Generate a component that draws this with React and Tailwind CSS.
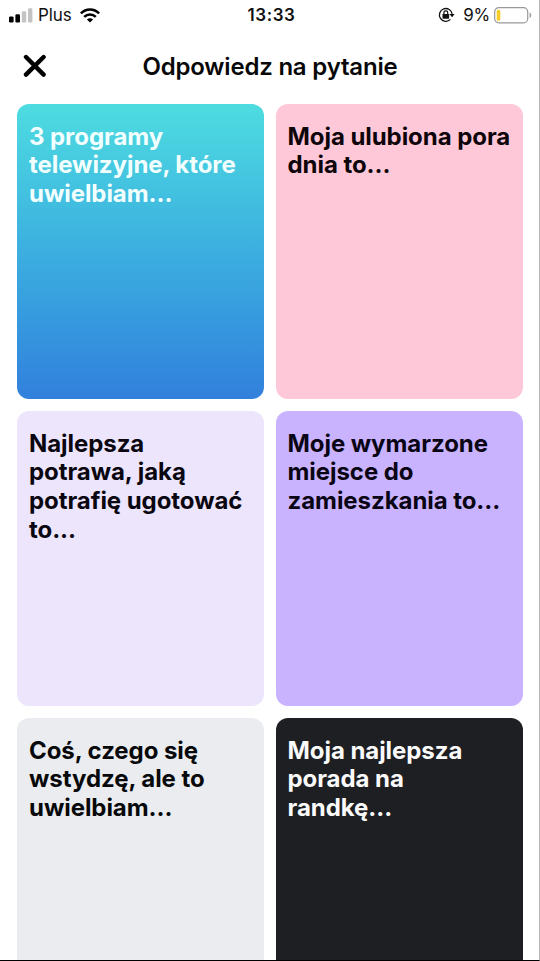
import React from "react";

const prompts = [
  {
    lines: ["3 programy", "telewizyjne, które", "uwielbiam..."],
    style: "bg-linear-to-b from-[#4edce0] to-[#3280dc] text-[#f2ffff]",
  },
  {
    lines: ["Moja ulubiona pora", "dnia to..."],
    style: "bg-[#fec8d8] text-[#0d0509]",
  },
  {
    lines: ["Najlepsza", "potrawa, jaką", "potrafię ugotować", "to..."],
    style: "bg-[#ece5fc] text-[#0a0710]",
  },
  {
    lines: ["Moje wymarzone", "miejsce do", "zamieszkania to..."],
    style: "bg-[#c9b3fe] text-[#0a0514]",
  },
  {
    lines: ["Coś, czego się", "wstydzę, ale to", "uwielbiam..."],
    style: "bg-[#ebecf0] text-[#08090b]",
  },
  {
    lines: ["Moja najlepsza", "porada na", "randkę..."],
    style: "bg-[#1e1f22] text-[#fafafa]",
  },
];

const SignalIcon = () => (
  <svg width="25" height="15" viewBox="0 0 25 15" className="block">
    <rect x="0" y="8.5" width="4.6" height="6" rx="1.3" fill="#000" />
    <rect x="6.4" y="6.2" width="4.6" height="8.3" rx="1.3" fill="#000" />
    <rect x="12.8" y="3.2" width="4.4" height="11.3" rx="1.2" fill="#c4c4c4" />
    <rect x="19" y="0.2" width="4.4" height="14.3" rx="1.2" fill="#c4c4c4" />
  </svg>
);

const WifiIcon = () => (
  <svg width="20" height="15" viewBox="0 0 20 15" className="block" fill="none" stroke="#000" strokeWidth="2.5">
    <path d="M0.9 5.4 C5.9 0.1 14.1 0.1 19.1 5.4" />
    <path d="M4.2 8.9 C7.4 5.6 12.6 5.6 15.8 8.9" />
    <path d="M10 14.4 L6.9 11.4 C8.6 9.9 11.4 9.9 13.1 11.4 Z" fill="#000" stroke="none" />
  </svg>
);

const RotationLockIcon = () => (
  <svg width="17" height="16" viewBox="0 0 17 16" className="block" fill="none" stroke="#111" strokeWidth="1.3">
    <path d="M12.4 12.4 A6.4 6.4 0 1 1 14.2 7.2" />
    <path d="M11.3 7 H16.6 L14.1 10.2 Z" fill="#111" stroke="none" />
    <rect x="4.5" y="7" width="6.6" height="4.7" rx="0.6" fill="#111" stroke="none" />
    <path d="M5.9 7.2 V5.8 A1.9 1.9 0 0 1 9.7 5.8 V7.2" strokeWidth="1.2" />
  </svg>
);

const BatteryIcon = () => (
  <svg width="38" height="17" viewBox="0 0 38 17" className="block">
    <rect x="0.7" y="0.7" width="33" height="15.2" rx="4.2" fill="#fff" stroke="#999" strokeWidth="1.2" />
    <rect x="2.7" y="2.8" width="3.6" height="11" rx="1.5" fill="#f7ce28" />
    <path d="M35.6 5.6 C37.8 6.3 37.8 10.3 35.6 11 Z" fill="#999" />
  </svg>
);

const CloseIcon = () => (
  <svg width="24" height="24" viewBox="0 0 24 24" className="block" fill="none" stroke="#000" strokeWidth="4.4" strokeLinecap="round">
    <path d="M3 3 L20.6 20.6 M20.6 3 L3 20.6" />
  </svg>
);

const StatusBar = () => (
  <div className="grid h-[30px] grid-cols-[1fr_auto_1fr] items-center pl-[9px] pr-[7px] text-[17px] leading-none text-[#111]">
    <div className="flex items-center">
      <SignalIcon />
      <span className="ml-[4px] tracking-[-0.1px]">Plus</span>
      <div className="ml-[8px]">
        <WifiIcon />
      </div>
    </div>
    <span className="pl-[2px] font-semibold tracking-[0.6px]">13:33</span>
    <div className="flex items-center justify-end">
      <RotationLockIcon />
      <span className="ml-[8px] mr-[4px] tracking-[-0.3px]">9%</span>
      <BatteryIcon />
    </div>
  </div>
);

const PromptCard = ({ lines, style }) => (
  <button className={`flex h-[295px] flex-col items-start rounded-[12px] px-[12px] pt-[18.6px] text-left text-[24px] font-[660] leading-[28.8px] tracking-[-0.06px] ${style}`}>
    {lines.map((line) => (
      <span key={line} className="whitespace-nowrap">
        {line}
      </span>
    ))}
  </button>
);

const App = () => {
  return (
    <div className="h-[961px] w-[540px] overflow-hidden border-r border-b border-r-[#b5b5b5] border-b-black bg-white font-['Inter',sans-serif]">
      <StatusBar />
      <header className="grid h-[74px] grid-cols-[1fr_auto_1fr] items-start px-[23px]">
        <button className="mt-[24px] w-[24px]" aria-label="Zamknij">
          <CloseIcon />
        </button>
        <h1 className="mt-[22px] pl-[1px] text-[24px] font-[580] leading-[30px] tracking-[-0.2px] text-[#080808]">Odpowiedz na pytanie</h1>
      </header>
      <main className="grid grid-cols-[247px_247px] gap-x-[11.5px] gap-y-[12px] pl-[17px]">
        {prompts.map((prompt) => (
          <PromptCard key={prompt.lines[0]} {...prompt} />
        ))}
      </main>
    </div>
  );
};

export default App;
